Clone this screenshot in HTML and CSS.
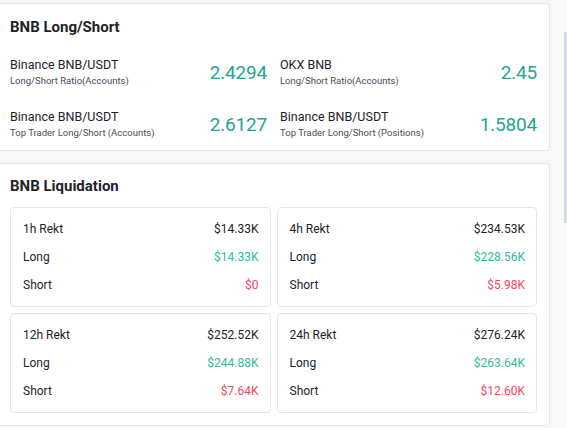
FILE: index.html
```html
<!DOCTYPE html>
<html lang="en">
<head>
  <meta charset="UTF-8" />
  <meta name="viewport" content="width=device-width, initial-scale=1" />
  <title>BNB Long/Short &amp; Liquidation</title>
  <link rel="stylesheet" href="styles.css">
</head>
<body>

  <div class="page">
    <div class="content">

      <section class="card">
        <h2>BNB Long/Short</h2>
        <div class="ratios">
          <div class="ratio">
            <div class="ratio-label">
              <div class="pair">Binance BNB/USDT</div>
              <div class="kind">Long/Short Ratio(Accounts)</div>
            </div>
            <div class="ratio-value">2.4294</div>
          </div>
          <div class="ratio">
            <div class="ratio-label">
              <div class="pair">OKX BNB</div>
              <div class="kind">Long/Short Ratio(Accounts)</div>
            </div>
            <div class="ratio-value">2.45</div>
          </div>
          <div class="ratio">
            <div class="ratio-label">
              <div class="pair">Binance BNB/USDT</div>
              <div class="kind">Top Trader Long/Short (Accounts)</div>
            </div>
            <div class="ratio-value">2.6127</div>
          </div>
          <div class="ratio">
            <div class="ratio-label">
              <div class="pair">Binance BNB/USDT</div>
              <div class="kind">Top Trader Long/Short (Positions)</div>
            </div>
            <div class="ratio-value">1.5804</div>
          </div>
        </div>
      </section>

      <section class="card liq-card">
        <h2>BNB Liquidation</h2>
        <div class="liq-grid">
          <div class="liq-box">
            <div class="liq-row"><span>1h Rekt</span><span class="total">$14.33K</span></div>
            <div class="liq-row"><span>Long</span><span class="long">$14.33K</span></div>
            <div class="liq-row"><span>Short</span><span class="short">$0</span></div>
          </div>
          <div class="liq-box">
            <div class="liq-row"><span>4h Rekt</span><span class="total">$234.53K</span></div>
            <div class="liq-row"><span>Long</span><span class="long">$228.56K</span></div>
            <div class="liq-row"><span>Short</span><span class="short">$5.98K</span></div>
          </div>
          <div class="liq-box">
            <div class="liq-row"><span>12h Rekt</span><span class="total">$252.52K</span></div>
            <div class="liq-row"><span>Long</span><span class="long">$244.88K</span></div>
            <div class="liq-row"><span>Short</span><span class="short">$7.64K</span></div>
          </div>
          <div class="liq-box">
            <div class="liq-row"><span>24h Rekt</span><span class="total">$276.24K</span></div>
            <div class="liq-row"><span>Long</span><span class="long">$263.64K</span></div>
            <div class="liq-row"><span>Short</span><span class="short">$12.60K</span></div>
          </div>
        </div>
      </section>

    </div>
    <div class="scrollbar"><div class="thumb"></div></div>
  </div>

</body>
</html>
```

FILE: styles.css
```css
body {
  margin: 0;
  background: #f8f8f8;
  font-family: Roboto, "Noto Sans", sans-serif;
  color: #1e2329;
  overflow: hidden;
}

.page {
  display: flex;
  height: 428px;
}

.content {
  width: 554px;
  margin-left: -4px;
  padding-top: 3px;
  display: flex;
  flex-direction: column;
  gap: 12px;
}

.card {
  background: #fff;
  border: 1px solid #e6e6e6;
  border-radius: 4px;
  padding: 0 12px 0 13px;
}

h2 {
  margin: 0;
  font-size: 15px;
  font-weight: 700;
  line-height: 20px;
  color: #1e2329;
  padding-top: 13px;
}

.ratios {
  display: grid;
  grid-template-columns: 1fr 1fr;
  column-gap: 13px;
  row-gap: 20px;
  padding: 19px 0 10px;
}

.ratio {
  display: flex;
  justify-content: space-between;
  align-items: center;
}

.pair {
  font-size: 12.5px;
  line-height: 17px;
  color: #1e2329;
}

.kind {
  font-size: 9.5px;
  line-height: 14px;
  color: #474d57;
  margin-top: 1px;
}

.ratio-value {
  font-size: 19px;
  color: #1fa593;
  letter-spacing: -0.2px;
}

.liq-card h2 {
  padding-top: 12px;
}

.liq-grid {
  display: grid;
  grid-template-columns: 1fr 1fr;
  gap: 6px 6px;
  padding: 11px 0 12px;
}

.liq-box {
  border: 1px solid #e6e6e6;
  border-radius: 4px;
  padding: 7px 11px 7px 12px;
}

.liq-row {
  display: flex;
  justify-content: space-between;
  align-items: center;
  height: 28px;
  font-size: 12px;
  color: #1e2329;
}

.liq-row .long {
  color: #2ebd9b;
}

.liq-row .short {
  color: #f6465d;
}

.scrollbar {
  flex: 1;
  position: relative;
}

.thumb {
  position: absolute;
  top: 32px;
  right: 0;
  width: 3px;
  height: 191px;
  background: #d6dae4;
}
```
